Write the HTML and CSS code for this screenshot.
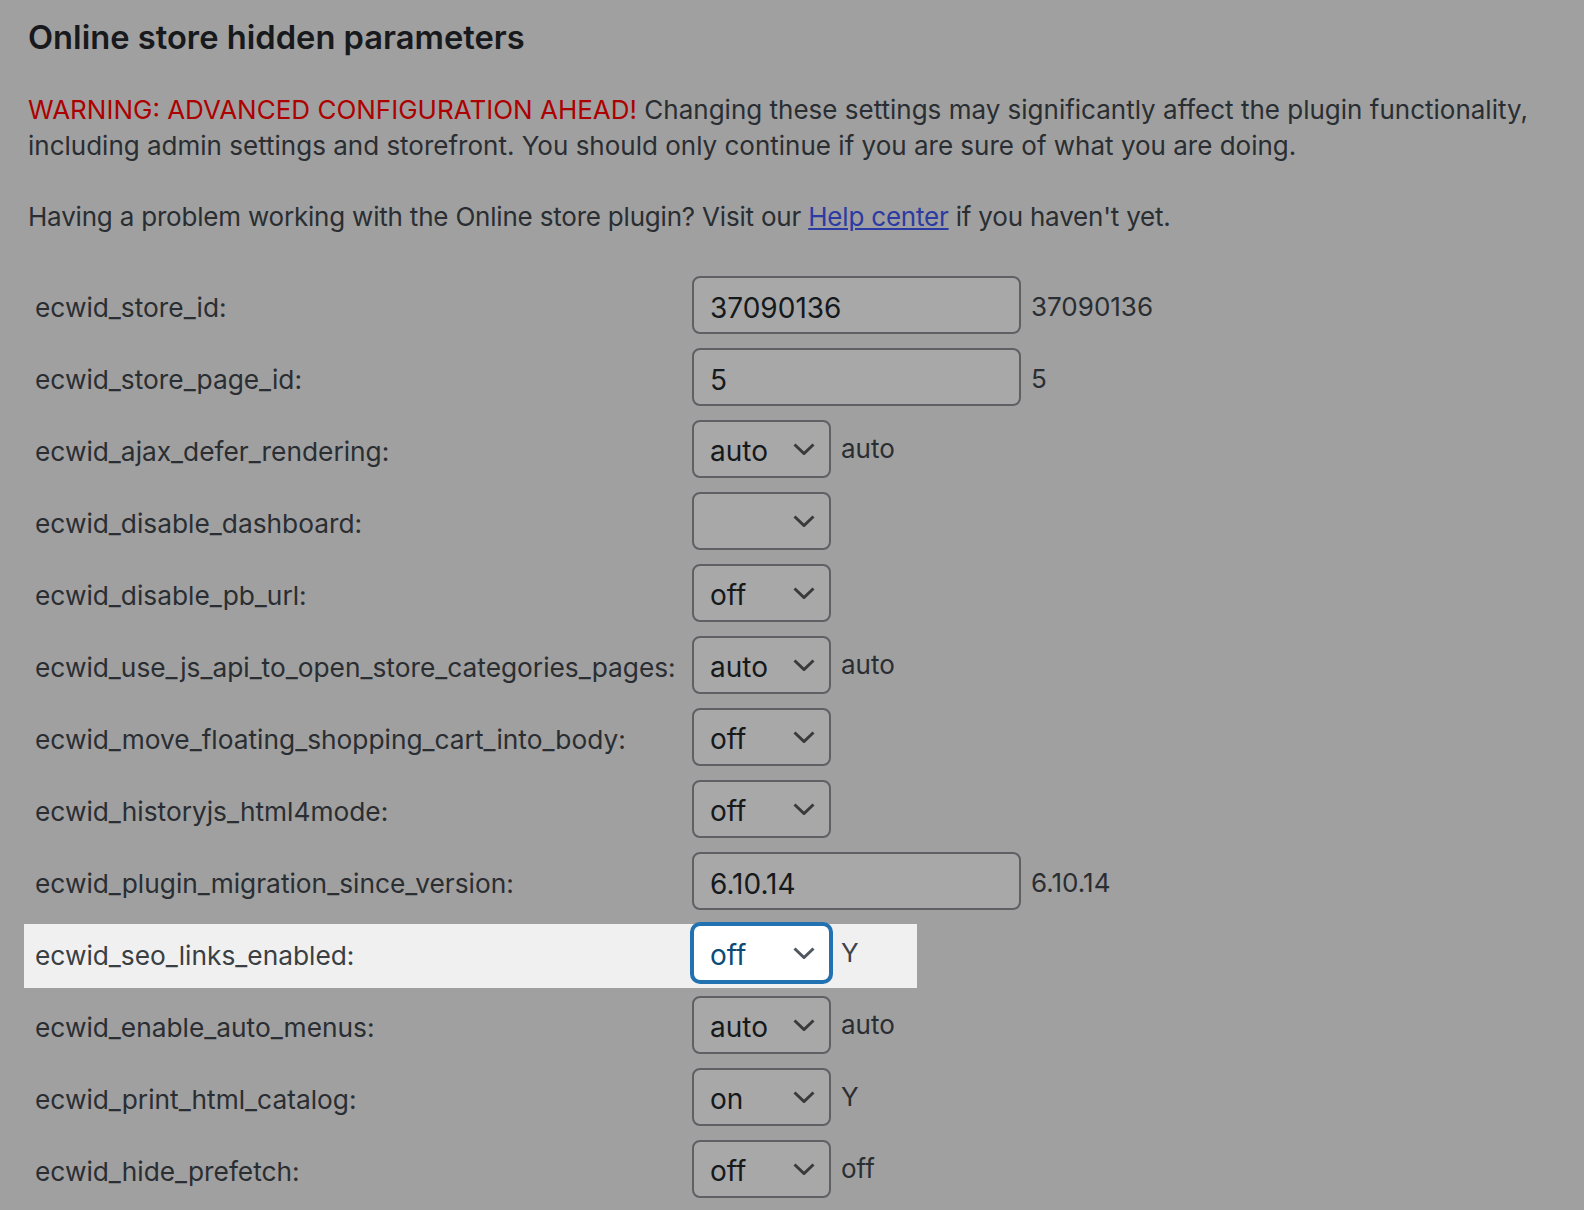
FILE: index.html
```html
<!DOCTYPE html>
<html lang="en">

<head>
  <meta charset="UTF-8">
  <title>Online store hidden parameters</title>
  <link rel="stylesheet" href="styles.css">
</head>

<body>

  <div class="wrap">
    <h2 class="page-title">Online store hidden parameters</h2>

    <p class="intro">
      <span class="warning">WARNING: ADVANCED CONFIGURATION AHEAD!</span>
      Changing these settings may significantly affect the plugin functionality, including admin settings and storefront. You should only continue if you are sure of what you are doing.
    </p>

    <p class="intro">Having a problem working with the Online store plugin? Visit our <a href="#">Help center</a> if you haven't yet.</p>

    <div class="params">
      <div class="param">
        <label class="param-name">ecwid_store_id:</label>
        <div class="param-field">
          <input class="text-input" type="text" value="37090136">
          <span class="current">37090136</span>
        </div>
      </div>

      <div class="param">
        <label class="param-name">ecwid_store_page_id:</label>
        <div class="param-field">
          <input class="text-input" type="text" value="5">
          <span class="current">5</span>
        </div>
      </div>

      <div class="param">
        <label class="param-name">ecwid_ajax_defer_rendering:</label>
        <div class="param-field">
          <span class="select"><span class="select-value">auto</span><svg class="chevron" viewBox="0 0 22 12"><path d="M1.5 1.5 11 10.5 20.5 1.5"/></svg></span>
          <span class="current current-raised">auto</span>
        </div>
      </div>

      <div class="param">
        <label class="param-name">ecwid_disable_dashboard:</label>
        <div class="param-field">
          <span class="select"><span class="select-value"></span><svg class="chevron" viewBox="0 0 22 12"><path d="M1.5 1.5 11 10.5 20.5 1.5"/></svg></span>
        </div>
      </div>

      <div class="param">
        <label class="param-name">ecwid_disable_pb_url:</label>
        <div class="param-field">
          <span class="select"><span class="select-value">off</span><svg class="chevron" viewBox="0 0 22 12"><path d="M1.5 1.5 11 10.5 20.5 1.5"/></svg></span>
        </div>
      </div>

      <div class="param">
        <label class="param-name">ecwid_use_js_api_to_open_store_categories_pages:</label>
        <div class="param-field">
          <span class="select"><span class="select-value">auto</span><svg class="chevron" viewBox="0 0 22 12"><path d="M1.5 1.5 11 10.5 20.5 1.5"/></svg></span>
          <span class="current current-raised">auto</span>
        </div>
      </div>

      <div class="param">
        <label class="param-name">ecwid_move_floating_shopping_cart_into_body:</label>
        <div class="param-field">
          <span class="select"><span class="select-value">off</span><svg class="chevron" viewBox="0 0 22 12"><path d="M1.5 1.5 11 10.5 20.5 1.5"/></svg></span>
        </div>
      </div>

      <div class="param">
        <label class="param-name">ecwid_historyjs_html4mode:</label>
        <div class="param-field">
          <span class="select"><span class="select-value">off</span><svg class="chevron" viewBox="0 0 22 12"><path d="M1.5 1.5 11 10.5 20.5 1.5"/></svg></span>
        </div>
      </div>

      <div class="param">
        <label class="param-name">ecwid_plugin_migration_since_version:</label>
        <div class="param-field">
          <input class="text-input" type="text" value="6.10.14">
          <span class="current">6.10.14</span>
        </div>
      </div>

      <div class="param is-focused">
        <label class="param-name">ecwid_seo_links_enabled:</label>
        <div class="param-field">
          <span class="select select-focus"><span class="select-value">off</span><svg class="chevron" viewBox="0 0 22 12"><path d="M1.5 1.5 11 10.5 20.5 1.5"/></svg></span>
          <span class="current current-raised">Y</span>
        </div>
      </div>

      <div class="param">
        <label class="param-name">ecwid_enable_auto_menus:</label>
        <div class="param-field">
          <span class="select"><span class="select-value">auto</span><svg class="chevron" viewBox="0 0 22 12"><path d="M1.5 1.5 11 10.5 20.5 1.5"/></svg></span>
          <span class="current current-raised">auto</span>
        </div>
      </div>

      <div class="param">
        <label class="param-name">ecwid_print_html_catalog:</label>
        <div class="param-field">
          <span class="select"><span class="select-value">on</span><svg class="chevron" viewBox="0 0 22 12"><path d="M1.5 1.5 11 10.5 20.5 1.5"/></svg></span>
          <span class="current current-raised">Y</span>
        </div>
      </div>

      <div class="param">
        <label class="param-name">ecwid_hide_prefetch:</label>
        <div class="param-field">
          <span class="select"><span class="select-value">off</span><svg class="chevron" viewBox="0 0 22 12"><path d="M1.5 1.5 11 10.5 20.5 1.5"/></svg></span>
          <span class="current current-raised">off</span>
        </div>
      </div>
    </div>
  </div>

</body>

</html>
```

FILE: styles.css
```css
html {
  box-sizing: border-box;
}

*,
*:before,
*:after {
  box-sizing: inherit;
}

body {
  margin: 0;
  background: #a0a0a0;
  color: #2a2e32;
  font-family: Inter, "Open Sans", sans-serif;
  font-size: 26px;
  line-height: 1.4;
}

.wrap {
  padding: 0 0 0 28px;
}

.page-title {
  margin: 0;
  padding-top: 14px;
  font-size: 32.7px;
  font-weight: 600;
  line-height: 46px;
  color: #17191c;
}

.intro {
  margin: 32px 0 0;
  line-height: 36px;
}

.intro + .intro {
  margin-top: 35px;
  letter-spacing: -0.2px;
}

.warning {
  color: #ad0000;
}

a {
  color: #2b3ba3;
  text-decoration: underline;
}

.params {
  margin: 34px 0 0 -4px;
}

.param {
  display: flex;
  align-items: center;
  height: 72px;
}

.param.is-focused {
  background: linear-gradient(#f0f0f0, #f0f0f0) no-repeat 0 7px / 893px 64px;
}

.param-name {
  width: 658px;
  padding: 6px 0 0 11px;
  font-size: 26.3px;
  color: #2a2e32;
}

.is-focused .param-name {
  color: #3a3f44;
}

.param-field {
  display: flex;
  align-items: center;
  gap: 10px;
  padding-left: 10px;
}

.text-input {
  width: 329px;
  height: 58px;
  margin: 0;
  padding: 5px 16px 0;
  border: 2px solid #5f6064;
  border-radius: 8px;
  background: #a8a8a8;
  color: #15191c;
  font-family: inherit;
  font-size: 28px;
}

.select {
  display: flex;
  align-items: center;
  justify-content: space-between;
  width: 139px;
  height: 58px;
  padding: 0 14px 0 16px;
  border: 2px solid #5f6064;
  border-radius: 8px;
  background: #a8a8a8;
  color: #15191c;
  font-size: 28px;
}

.select-value {
  padding-top: 6px;
}

.select-focus {
  border-color: #2271b1;
  box-shadow: 0 0 0 2px #2271b1;
  background: #fff;
  color: #0a4b78;
}

.chevron {
  width: 22px;
  height: 12px;
  fill: none;
  stroke: #3a3a3a;
  stroke-width: 3;
}

.select-focus .chevron {
  stroke: #50575e;
}

.current {
  padding-top: 5px;
  font-size: 26px;
  color: #2a2e32;
}

.current-raised {
  position: relative;
  top: -2px;
}

.is-focused .current {
  color: #3c434a;
}
```
